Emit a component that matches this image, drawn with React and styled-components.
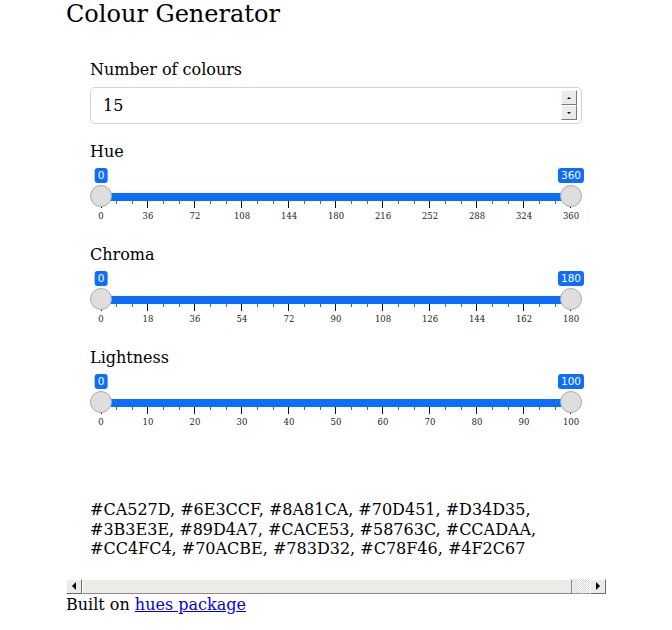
import React from "react";
import styled, { createGlobalStyle } from "styled-components";

const GlobalStyle = createGlobalStyle`
  body {
    margin: 0;
    background: #fff;
    color: #000;
    font-family: "DejaVu Serif", serif;
    font-size: 16px;
  }
`;

const Page = styled.div`
  width: 540px;
  margin-left: 66px;
  display: flex;
  flex-direction: column;
`;

const Title = styled.h1`
  margin: 0;
  font-size: 24px;
  font-weight: 400;
  line-height: 28px;
`;

const Form = styled.div`
  display: flex;
  flex-direction: column;
  padding: 32px 0 0 24px;
  width: 492px;
`;

const Label = styled.div`
  line-height: 19px;
  margin-bottom: ${(props) => props.gap || 3}px;
`;

const NumberGroup = styled.div`
  margin-bottom: 18px;
`;

const NumberBox = styled.div`
  box-sizing: border-box;
  height: 37px;
  border: 1px solid #ced4da;
  border-radius: 5px;
  padding: 2px 4px 0 12px;
  display: flex;
  align-items: center;
  justify-content: space-between;
  line-height: 19px;
`;

const Value = styled.span`
  margin-top: -2px;
`;

const Spinner = styled.div`
  display: flex;
  flex-direction: column;
  align-self: flex-start;
`;

const SpinButton = styled.div`
  box-sizing: border-box;
  width: 16px;
  height: 15px;
  background: #ecebe8;
  border: 1px solid;
  border-color: #fff #7a7a7a #7a7a7a #fff;
  display: flex;
  align-items: center;
  justify-content: center;
`;

const Arrow = styled.span`
  width: 0;
  height: 0;
  border-left: ${(props) => (props.dir === "right" ? "4px solid #000" : props.dir === "left" ? "none" : "2px solid transparent")};
  border-right: ${(props) => (props.dir === "left" ? "4px solid #000" : props.dir === "right" ? "none" : "2px solid transparent")};
  border-top: ${(props) => (props.dir === "down" ? "2px solid #000" : props.dir === "up" ? "none" : "4px solid transparent")};
  border-bottom: ${(props) => (props.dir === "up" ? "2px solid #000" : props.dir === "down" ? "none" : "4px solid transparent")};
`;

const SliderGroup = styled.div`
  margin-bottom: 23px;
`;

const SliderWrap = styled.div`
  display: flex;
  flex-direction: column;
  height: 58px;
  margin: 0 11px;
`;

const TrackArea = styled.div`
  position: relative;
  height: 37px;
  flex-shrink: 0;
`;

const Bar = styled.div`
  position: absolute;
  top: 29px;
  left: 0;
  right: 0;
  height: 8px;
  background: #0d6efd;
`;

const Handle = styled.div`
  position: absolute;
  top: 21px;
  left: ${(props) => (props.end ? "100%" : "0")};
  width: 22px;
  height: 22px;
  box-sizing: border-box;
  border-radius: 50%;
  background: #dedede;
  border: 1px solid #ababab;
  transform: translateX(-50%);
`;

const Badge = styled.div`
  position: absolute;
  top: 4px;
  left: ${(props) => (props.end ? "100%" : "0")};
  transform: translateX(-50%);
  padding: 1px 3px;
  border-radius: 3px;
  background: #0d6efd;
  color: #fff;
  font-family: "DejaVu Sans", sans-serif;
  font-size: 10.5px;
  line-height: 13px;
  white-space: nowrap;
`;

const TickRow = styled.div`
  display: flex;
  justify-content: space-between;
  align-items: flex-start;
  height: 7px;
  margin: 0 -0.5px;
`;

const Tick = styled.div`
  width: 1px;
  height: ${(props) => (props.major ? 7 : 3)}px;
  background: ${(props) => (props.major ? "#111" : "#666")};
`;

const LabelRow = styled.div`
  display: flex;
  justify-content: space-between;
  margin-top: 3px;
`;

const TickLabel = styled.div`
  width: 0;
  display: flex;
  justify-content: center;
  white-space: nowrap;
  font-size: 8.5px;
  line-height: 10px;
  color: #222;
`;

const Output = styled.div`
  margin-top: 49px;
  line-height: 19.5px;
`;

const ScrollBar = styled.div`
  display: flex;
  height: 15px;
  margin-top: 20px;
  background: #ecebe8;
  border-bottom: 1px solid #9a9a9a;
  box-sizing: border-box;
`;

const ScrollButton = styled.div`
  box-sizing: border-box;
  width: 16px;
  height: 15px;
  background: #ecebe8;
  border: 1px solid;
  border-color: #fff #6e6e6e #6e6e6e #fff;
  display: flex;
  align-items: center;
  justify-content: center;
`;

const Thumb = styled.div`
  flex: 1;
  box-sizing: border-box;
  height: 15px;
  background: #edebe7;
  border: 1px solid;
  border-color: #fff #8a8a8a #8a8a8a #fff;
`;

const Checker = styled.div`
  width: 18px;
  height: 14px;
  background: repeating-conic-gradient(#d9d9d9 0 25%, #fff 0 50%) 0 0 / 2px 2px;
`;

const Footer = styled.div`
  margin-top: 1px;
  line-height: 20px;
`;

const Link = styled.a`
  color: #0000ee;
  text-decoration: underline;
`;

const Slider = ({ label, min, max }) => {
  const step = (max - min) / 10;
  const ticks = [];
  for (let i = 0; i <= 30; i++) {
    ticks.push(<Tick key={i} major={i % 3 === 0} />);
  }
  const labels = [];
  for (let i = 0; i <= 10; i++) {
    labels.push(<TickLabel key={i}>{Math.round(min + i * step)}</TickLabel>);
  }
  return (
    <SliderGroup>
      <Label>{label}</Label>
      <SliderWrap>
        <TrackArea>
          <Bar />
          <Badge>{min}</Badge>
          <Badge end>{max}</Badge>
          <Handle />
          <Handle end />
        </TrackArea>
        <TickRow>{ticks}</TickRow>
        <LabelRow>{labels}</LabelRow>
      </SliderWrap>
    </SliderGroup>
  );
};

const App = () => {
  return (
    <Page>
      <GlobalStyle />
      <Title>Colour Generator</Title>
      <Form>
        <NumberGroup>
          <Label gap={8}>Number of colours</Label>
          <NumberBox>
            <Value>15</Value>
            <Spinner>
              <SpinButton>
                <Arrow dir="up" />
              </SpinButton>
              <SpinButton>
                <Arrow dir="down" />
              </SpinButton>
            </Spinner>
          </NumberBox>
        </NumberGroup>
        <Slider label="Hue" min={0} max={360} />
        <Slider label="Chroma" min={0} max={180} />
        <Slider label="Lightness" min={0} max={100} />
        <Output>
          #CA527D, #6E3CCF, #8A81CA, #70D451, #D34D35, #3B3E3E, #89D4A7, #CACE53,
          #58763C, #CCADAA, #CC4FC4, #70ACBE, #783D32, #C78F46, #4F2C67
        </Output>
      </Form>
      <ScrollBar>
        <ScrollButton>
          <Arrow dir="left" />
        </ScrollButton>
        <Thumb />
        <Checker />
        <ScrollButton>
          <Arrow dir="right" />
        </ScrollButton>
      </ScrollBar>
      <Footer>
        Built on <Link href="#">hues package</Link>
      </Footer>
    </Page>
  );
};

export default App;
